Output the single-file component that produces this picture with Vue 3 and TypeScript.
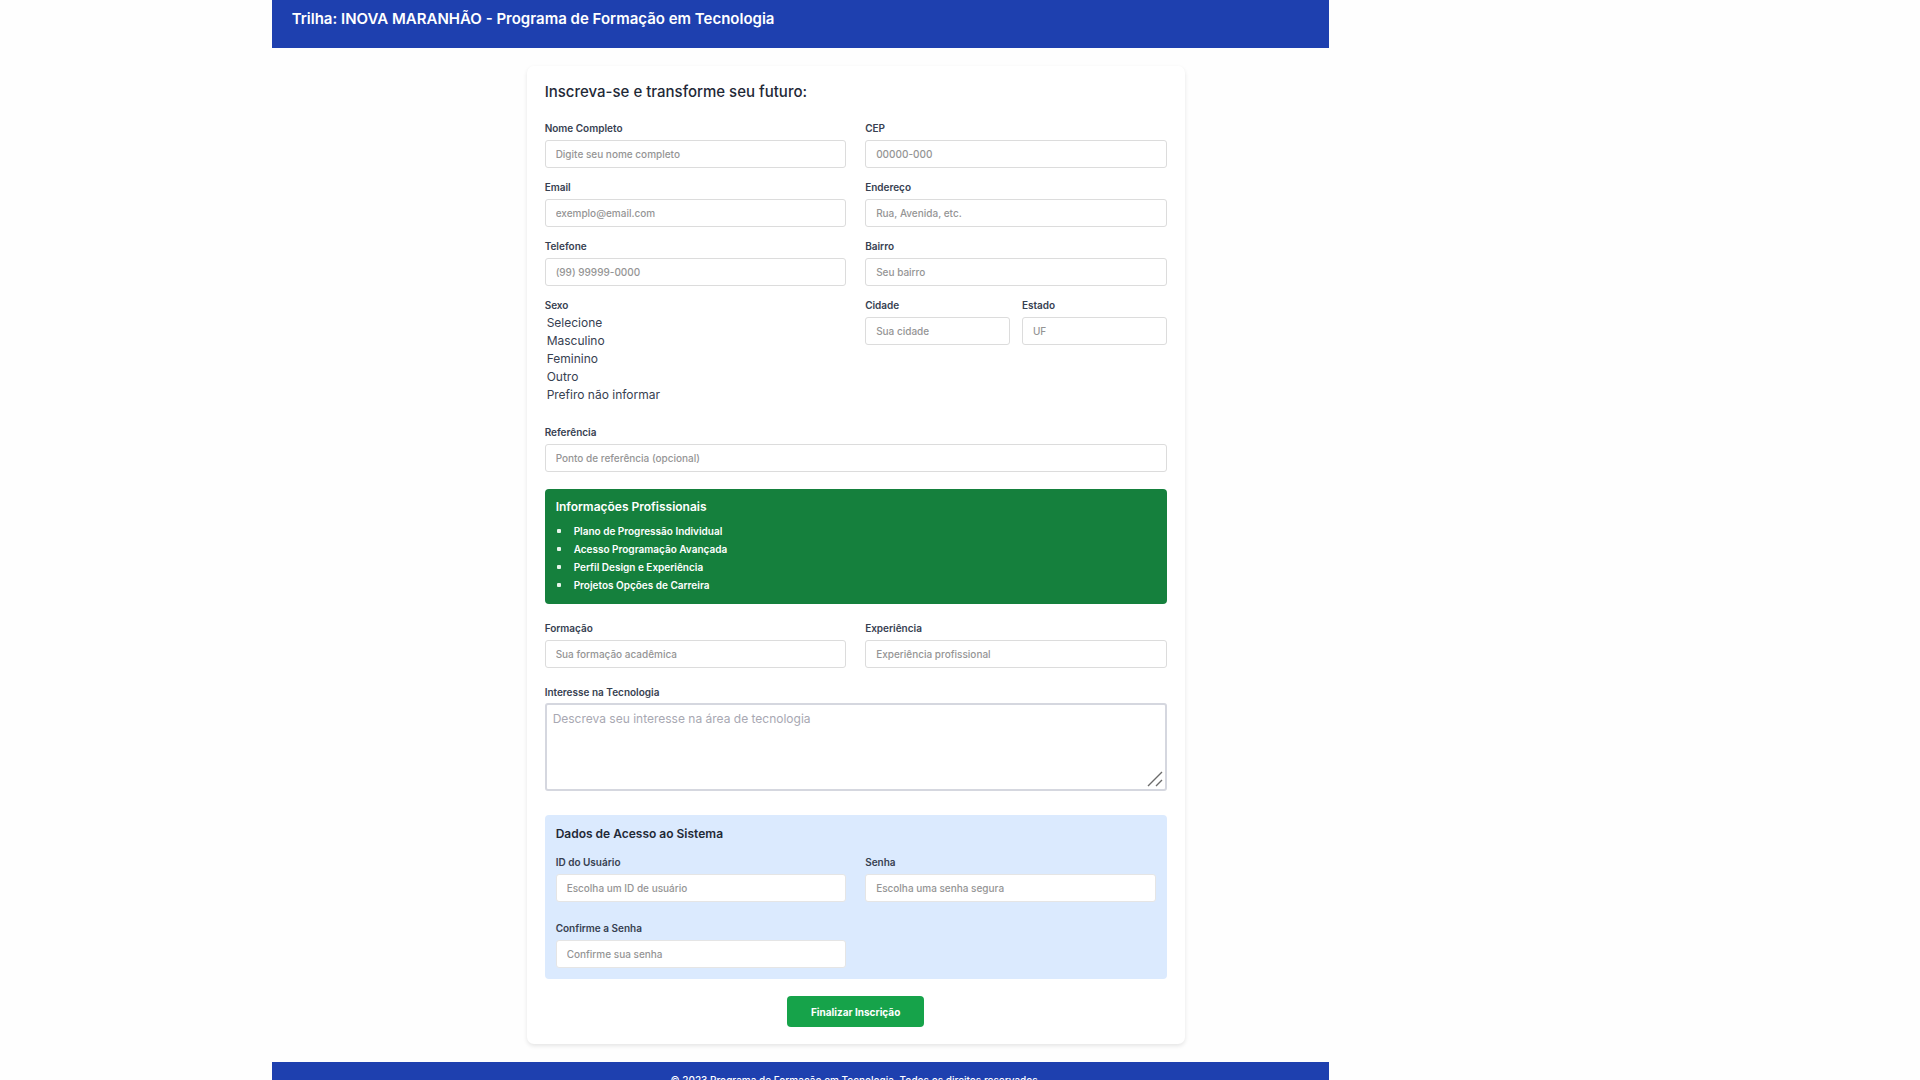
<script setup lang="ts">
import { reactive, ref } from 'vue'

interface Field {
  id: string
  label: string
  placeholder: string
  type?: string
}

const personal: Field[] = [
  { id: 'nome', label: 'Nome Completo', placeholder: 'Digite seu nome completo' },
  { id: 'email', label: 'Email', placeholder: 'exemplo@email.com', type: 'email' },
  { id: 'telefone', label: 'Telefone', placeholder: '(99) 99999-0000', type: 'tel' },
]
const address: Field[] = [
  { id: 'cep', label: 'CEP', placeholder: '00000-000' },
  { id: 'endereco', label: 'Endereço', placeholder: 'Rua, Avenida, etc.' },
  { id: 'bairro', label: 'Bairro', placeholder: 'Seu bairro' },
]
const place: Field[] = [
  { id: 'cidade', label: 'Cidade', placeholder: 'Sua cidade' },
  { id: 'estado', label: 'Estado', placeholder: 'UF' },
]
const career: Field[] = [
  { id: 'formacao', label: 'Formação', placeholder: 'Sua formação acadêmica' },
  { id: 'experiencia', label: 'Experiência', placeholder: 'Experiência profissional' },
]
const access: Field[] = [
  { id: 'usuario', label: 'ID do Usuário', placeholder: 'Escolha um ID de usuário' },
  { id: 'senha', label: 'Senha', placeholder: 'Escolha uma senha segura', type: 'password' },
  { id: 'confirma', label: 'Confirme a Senha', placeholder: 'Confirme sua senha', type: 'password' },
]
const genders = ['Selecione', 'Masculino', 'Feminino', 'Outro', 'Prefiro não informar']
const tracks = [
  'Plano de Progressão Individual',
  'Acesso Programação Avançada',
  'Perfil Design e Experiência',
  'Projetos Opções de Carreira',
]

const form = reactive<Record<string, string>>({})
const gender = ref('')
</script>

<template>
  <div class="frame">
    <div class="page">
      <header class="top">
        <h1>Trilha: INOVA MARANHÃO - Programa de Formação em Tecnologia</h1>
      </header>

      <main>
        <form class="card" @submit.prevent>
          <h2>Inscreva-se e transforme seu futuro:</h2>

          <div class="columns">
            <div class="stack">
              <div v-for="f in personal" :key="f.id" class="field">
                <label :for="f.id">{{ f.label }}</label>
                <input :id="f.id" v-model="form[f.id]" :type="f.type ?? 'text'" :placeholder="f.placeholder" />
              </div>
              <div class="field">
                <label for="sexo" class="tight">Sexo</label>
                <select id="sexo" v-model="gender" size="5">
                  <option v-for="g in genders" :key="g" :value="g">{{ g }}</option>
                </select>
              </div>
            </div>
            <div class="stack">
              <div v-for="f in address" :key="f.id" class="field">
                <label :for="f.id">{{ f.label }}</label>
                <input :id="f.id" v-model="form[f.id]" type="text" :placeholder="f.placeholder" />
              </div>
              <div class="pair">
                <div v-for="f in place" :key="f.id" class="field">
                  <label :for="f.id">{{ f.label }}</label>
                  <input :id="f.id" v-model="form[f.id]" type="text" :placeholder="f.placeholder" />
                </div>
              </div>
            </div>
          </div>

          <div class="field reference">
            <label for="referencia">Referência</label>
            <input id="referencia" v-model="form.referencia" type="text" placeholder="Ponto de referência (opcional)" />
          </div>

          <section class="tracks">
            <h3>Informações Profissionais</h3>
            <ul>
              <li v-for="t in tracks" :key="t">{{ t }}</li>
            </ul>
          </section>

          <div class="columns">
            <div v-for="f in career" :key="f.id" class="field">
              <label :for="f.id">{{ f.label }}</label>
              <input :id="f.id" v-model="form[f.id]" type="text" :placeholder="f.placeholder" />
            </div>
          </div>

          <div class="field interest">
            <label for="interesse">Interesse na Tecnologia</label>
            <textarea id="interesse" v-model="form.interesse" placeholder="Descreva seu interesse na área de tecnologia"></textarea>
            <svg class="grip" viewBox="0 0 16 16" aria-hidden="true">
              <path d="M1 15 15 1M9 15l6-6" />
            </svg>
          </div>

          <section class="access">
            <h3>Dados de Acesso ao Sistema</h3>
            <div class="columns">
              <div v-for="f in access" :key="f.id" class="field">
                <label :for="f.id">{{ f.label }}</label>
                <input :id="f.id" v-model="form[f.id]" :type="f.type ?? 'text'" :placeholder="f.placeholder" />
              </div>
            </div>
          </section>

          <button type="submit">Finalizar Inscrição</button>
        </form>
      </main>

      <footer>© 2023 Programa de Formação em Tecnologia. Todos os direitos reservados.</footer>
    </div>
  </div>
</template>

<style>
body {
  margin: 0;
  background: #fefefe;
}
</style>

<style scoped>
* {
  box-sizing: border-box;
}
.frame {
  width: 55.05%;
  height: 100vh;
  margin-left: 14.15%;
  overflow: hidden;
  font-family: Inter, 'Liberation Sans', sans-serif;
  color: #1f2937;
}
/* The page is wider than its frame; the right edge is clipped. */
.page {
  width: 110.5%;
}
h1,
h2,
h3,
ul {
  margin: 0;
  padding: 0;
}
.top {
  padding: 7px 20px 17px;
  background: #1e40af;
  color: #fff;
}
h1 {
  font-size: 15px;
  font-weight: 600;
  line-height: 24px;
}
main {
  padding: 18px 0;
}
.card {
  max-width: 658px;
  margin: 0 auto;
  padding: 16px 18px 17px;
  border-radius: 7px;
  background: #fff;
  box-shadow: 0 2px 4px rgba(0, 0, 0, 0.1);
}
h2 {
  margin-bottom: 18px;
  font-size: 15px;
  font-weight: 500;
  line-height: 20px;
}
.columns {
  display: grid;
  grid-template-columns: 1fr 1fr;
  column-gap: 19px;
  row-gap: 18px;
}
.stack {
  display: flex;
  flex-direction: column;
  gap: 11px;
}
.pair {
  display: grid;
  grid-template-columns: 1fr 1fr;
  gap: 12px;
}
.field {
  display: flex;
  flex-direction: column;
  min-width: 0;
}
label {
  margin-bottom: 4px;
  font-size: 10px;
  font-weight: 600;
  line-height: 16px;
  color: #374151;
}
label.tight {
  margin-bottom: 2px;
}
input,
textarea {
  width: 100%;
  margin: 0;
  border-radius: 3px;
  background: #fff;
  font-family: inherit;
  color: #1f2937;
  outline: none;
}
input {
  height: 28px;
  padding: 0 10px;
  border: 1px solid #dcdcdc;
  font-size: 10px;
  font-weight: 500;
}
input::placeholder {
  color: #959595;
}
textarea {
  display: block;
  height: 88px;
  padding: 5px 6px;
  border: 2px solid #d5d7df;
  font-size: 12px;
  line-height: 18px;
  resize: none;
}
textarea::placeholder {
  color: #a8a8b2;
}
.grip {
  position: absolute;
  right: 4px;
  bottom: 4px;
  width: 16px;
  height: 16px;
  fill: none;
  stroke: #6b6b6b;
  stroke-width: 1.4;
  pointer-events: none;
}
select {
  height: 90px;
  padding: 0;
  border: 0;
  background: transparent;
  font-family: inherit;
  font-size: 12px;
  color: #374151;
  overflow: hidden;
  outline: none;
}
option {
  min-height: 18px;
  padding: 0 2px;
  line-height: 18px;
}
.reference {
  margin: 19px 0 17px;
}
h3 {
  font-size: 12px;
  font-weight: 600;
  line-height: 16px;
}
.tracks {
  margin-bottom: 16px;
  padding: 10px 11px;
  border-radius: 4px;
  background: #15803d;
  color: #fff;
}
.tracks ul {
  margin-top: 7px;
  padding-left: 1px;
  font-size: 10px;
  font-weight: 600;
  line-height: 18px;
  list-style: none;
}
.tracks li {
  display: flex;
  align-items: center;
  gap: 13px;
}
.tracks li::before {
  content: '';
  width: 4px;
  height: 4px;
  border-radius: 1px;
  background: #e6f4ea;
}
.interest {
  position: relative;
  margin: 16px 0 24px;
}
.interest label {
  margin-bottom: 3px;
}
.access {
  padding: 11px;
  border-radius: 4px;
  background: #dbeafe;
}
.access h3 {
  margin-bottom: 12px;
}
.access input {
  border-color: #e5e5e5;
}
button {
  display: block;
  height: 31px;
  margin: 17px auto 0;
  padding: 0 24px;
  border: 0;
  border-radius: 4px;
  background: #16a34a;
  color: #fff;
  font-family: inherit;
  font-size: 10px;
  font-weight: 700;
}
footer {
  padding: 9px 0;
  background: #1e40af;
  color: #fff;
  font-size: 10px;
  font-weight: 500;
  line-height: 18px;
  text-align: center;
}
</style>
